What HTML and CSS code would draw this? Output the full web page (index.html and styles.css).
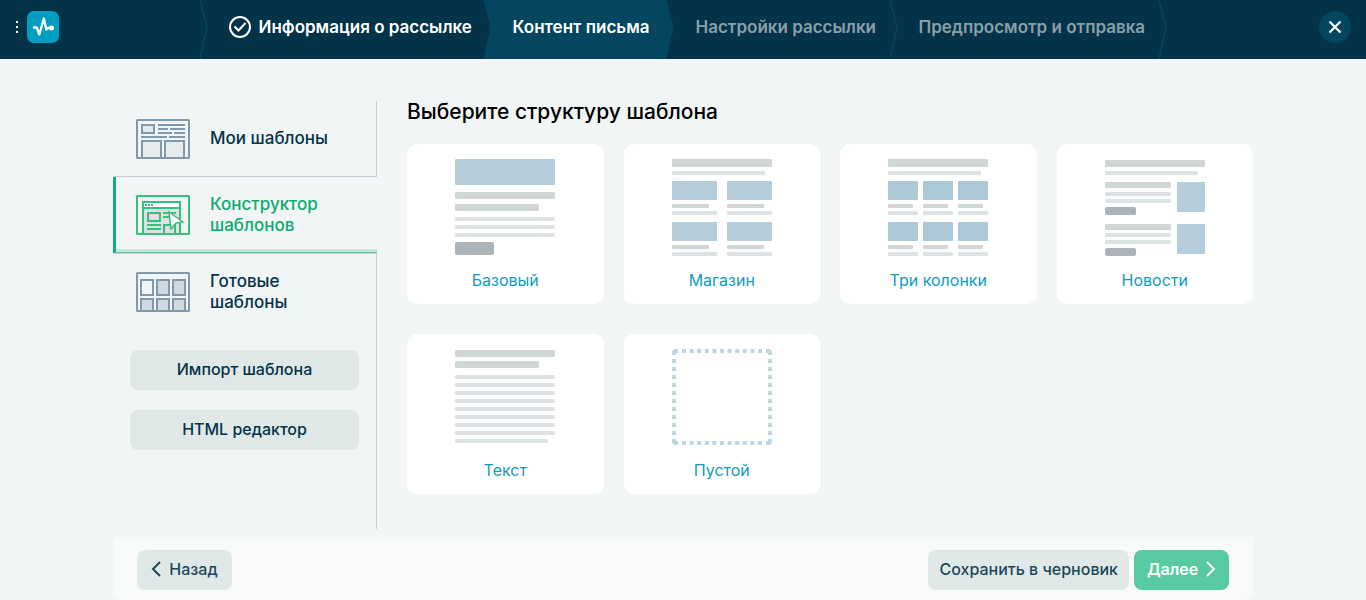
FILE: index.html
```html
<!DOCTYPE html>
<html lang="ru">
<head>
<meta charset="utf-8">
<meta name="viewport" content="width=device-width, initial-scale=1">
<title>Контент письма</title>
<link rel="stylesheet" href="styles.css">
</head>
<body>
<header class="topbar">
  <div class="topbar-brand">
    <button class="dots" type="button" aria-label="Меню"><svg width="2" height="12" viewBox="0 0 2 12" fill="#fff"><path d="M0 0h2v2H0zM0 5h2v2H0zM0 10h2v2H0z"/></svg></button>
    <a href="#" class="logo" aria-label="Главная"><svg width="32" height="32" viewBox="0 0 32 32"><rect width="32" height="32" rx="7" fill="#009fc1"/><path d="M6 16.500h3.800L12.300 23.500 16.800 7.500 19.300 18.500l1.500-1.500h4" fill="none" stroke="#fff" stroke-width="2.300" stroke-linejoin="round"/><circle cx="24.500" cy="17" r="2.500" fill="#fff"/></svg></a>
  </div>
  <nav class="steps" aria-label="Шаги">
    <a href="#" class="step step-done"><svg class="edge" width="8" height="59" viewBox="0 0 8 59"><path d="M0 0l7 27-7 32" fill="none" stroke="#04455f" stroke-width="1.500"/></svg><svg class="check" width="22" height="22" viewBox="0 0 22 22" fill="none" stroke="#fff" stroke-width="2"><circle cx="11" cy="11" r="10"/><path d="M5.500 10.500l4 4 7-7.500"/></svg>Информация о рассылке</a>
    <a href="#" class="step step-current" aria-current="step">Контент письма</a>
    <a href="#" class="step">Настройки рассылки</a>
    <a href="#" class="step"><svg class="edge" width="8" height="59" viewBox="0 0 8 59"><path d="M0 0l7 27-7 32" fill="none" stroke="#04455f" stroke-width="1.500"/></svg>Предпросмотр и отправка</a>
    <svg class="edge" width="8" height="59" viewBox="0 0 8 59"><path d="M0 0l7 27-7 32" fill="none" stroke="#04455f" stroke-width="1.500"/></svg>
  </nav>
  <button class="close" type="button" aria-label="Закрыть"><svg width="14" height="14" viewBox="0 0 14 14" stroke="#fff" stroke-width="2.200" fill="none"><path d="M1.500 1.500l11 11M12.500 1.500l-11 11"/></svg></button>
</header>

<div class="page">
  <div class="workspace">
    <aside class="sidebar">
      <a href="#" class="tab tab-first">
        <svg width="54" height="40" viewBox="0 0 54 40" fill="none" stroke="#8199aa" stroke-width="2"><rect x="1" y="1" width="52" height="38" rx=".5"/><rect x="6" y="6" width="12" height="8" fill="#e5eaec"/><path d="M22 6h27M22 10h10M34 10h15M22 14h14M38 14h11M5 18h26M33 18h16"/><path d="M6 39V22h19v17M29 39V22h19v17" fill="#e5eaec"/><path d="M1 39h52"/></svg>
        <span>Мои шаблоны</span>
      </a>
      <a href="#" class="tab tab-active">
        <svg width="54" height="40" viewBox="0 0 54 40" fill="none" stroke="#35c07c" stroke-width="2"><rect x="1" y="1" width="52" height="38" rx=".5"/><path d="M7 39V7h37v32" fill="#dcdfe6"/><path d="M8 8h35v4H8z" fill="#fff" stroke="none"/><path d="M7 13h37"/><path d="M9 10h2m1 0h2m1 0h2"/><rect x="12" y="18" width="12" height="8"/><path d="M27 18h13M27 22h8M11 30h14M11 34h14M28 39v-9h11v9M1 39h52"/><path d="M33 17l14 10-7 1-5 6z" fill="#fff" stroke-width="1.500"/></svg>
        <span>Конструктор шаблонов</span>
      </a>
      <div class="sidebar-rest">
        <a href="#" class="tab">
          <svg width="54" height="40" viewBox="0 0 54 40" fill="none" stroke="#8199aa" stroke-width="2"><rect x="1" y="1" width="52" height="38" rx=".5"/><path d="M5 8h12v15H5z"/><path d="M21 8h12v15H21zM37 8h12v15H37zM5 39V27h12v12M21 39V27h12v12M37 39V27h12v12" fill="#cfd8de"/><path d="M1 39h52"/></svg>
          <span>Готовые шаблоны</span>
        </a>
        <div class="sidebar-actions">
          <button class="btn" type="button">Импорт шаблона</button>
          <button class="btn" type="button">HTML редактор</button>
        </div>
      </div>
    </aside>

    <main class="content">
      <h1>Выберите структуру шаблона</h1>
      <div class="cards">
        <a href="#" class="card">
          <svg width="100" height="97" viewBox="0 0 100 97"><rect class="pic" width="100" height="26" rx="1"/><g class="head"><rect y="33" width="100" height="7" rx="1"/><rect y="45" width="84" height="7" rx="1"/></g><g class="line"><rect y="58" width="100" height="4" rx="1"/><rect y="66" width="100" height="4" rx="1"/><rect y="74" width="100" height="4" rx="1"/></g><rect class="pill" y="83" width="39" height="13" rx="2"/></svg>
          <span>Базовый</span>
        </a>
        <a href="#" class="card">
          <svg width="100" height="97" viewBox="0 0 100 97"><g class="head"><rect width="100" height="8" rx="1"/><rect y="45" width="37" height="4" rx="1"/><rect x="55" y="45" width="37" height="4" rx="1"/><rect y="86" width="37" height="4" rx="1"/><rect x="55" y="86" width="37" height="4" rx="1"/></g><g class="line"><rect y="12" width="93" height="4" rx="1"/><rect y="52" width="45" height="4" rx="1"/><rect x="55" y="52" width="45" height="4" rx="1"/><rect y="93" width="45" height="4" rx="1"/><rect x="55" y="93" width="45" height="4" rx="1"/></g><g class="pic"><rect y="22" width="45" height="19" rx="1"/><rect x="55" y="22" width="45" height="19" rx="1"/><rect y="63" width="45" height="19" rx="1"/><rect x="55" y="63" width="45" height="19" rx="1"/></g></svg>
          <span>Магазин</span>
        </a>
        <a href="#" class="card">
          <svg width="100" height="97" viewBox="0 0 100 97"><g class="head"><rect width="100" height="8" rx="1"/><rect y="45" width="25" height="4" rx="1"/><rect x="35" y="45" width="25" height="4" rx="1"/><rect x="70" y="45" width="25" height="4" rx="1"/><rect y="86" width="25" height="4" rx="1"/><rect x="35" y="86" width="25" height="4" rx="1"/><rect x="70" y="86" width="25" height="4" rx="1"/></g><g class="line"><rect y="12" width="93" height="4" rx="1"/><rect y="52" width="30" height="4" rx="1"/><rect x="35" y="52" width="30" height="4" rx="1"/><rect x="70" y="52" width="30" height="4" rx="1"/><rect y="93" width="30" height="4" rx="1"/><rect x="35" y="93" width="30" height="4" rx="1"/><rect x="70" y="93" width="30" height="4" rx="1"/></g><g class="pic pic-deep"><rect y="22" width="30" height="19" rx="1"/><rect x="35" y="22" width="30" height="19" rx="1"/><rect x="70" y="22" width="30" height="19" rx="1"/><rect y="63" width="30" height="19" rx="1"/><rect x="35" y="63" width="30" height="19" rx="1"/><rect x="70" y="63" width="30" height="19" rx="1"/></g></svg>
          <span>Три колонки</span>
        </a>
        <a href="#" class="card">
          <svg width="100" height="97" viewBox="0 0 100 97"><g class="head"><rect y="1" width="100" height="7" rx="1"/><rect y="23" width="66" height="6" rx="1"/><rect y="65" width="66" height="6" rx="1"/></g><g class="line"><rect y="12" width="93" height="4" rx="1"/><rect y="33" width="66" height="4" rx="1"/><rect y="40" width="66" height="4" rx="1"/><rect y="74" width="66" height="4" rx="1"/><rect y="81" width="66" height="4" rx="1"/></g><g class="pill"><rect y="48" width="31" height="8" rx="2"/><rect y="89" width="31" height="8" rx="2"/></g><g class="pic"><rect x="72" y="23" width="28" height="30" rx="1"/><rect x="72" y="65" width="28" height="30" rx="1"/></g></svg>
          <span>Новости</span>
        </a>
        <a href="#" class="card">
          <svg width="100" height="97" viewBox="0 0 100 97"><g class="head"><rect y="1" width="100" height="7" rx="1"/><rect y="12" width="84" height="7" rx="1"/></g><g class="line"><rect y="26" width="100" height="4" rx="1"/><rect y="34" width="100" height="4" rx="1"/><rect y="42" width="100" height="4" rx="1"/><rect y="50" width="100" height="4" rx="1"/><rect y="58" width="100" height="4" rx="1"/><rect y="66" width="100" height="4" rx="1"/><rect y="74" width="100" height="4" rx="1"/><rect y="82" width="100" height="4" rx="1"/><rect y="90" width="93" height="4" rx="1"/></g></svg>
          <span>Текст</span>
        </a>
        <a href="#" class="card">
          <svg width="100" height="97" viewBox="0 0 100 97" fill="none" stroke="#bdd4e1" stroke-width="4"><path d="M10 2h80M10 94h80" stroke-dasharray="4 3.600"/><path d="M2 10v76M98 10v76" stroke-dasharray="4 4"/><path d="M2 6V4q0-2 2-2h2M94 2h2q2 0 2 2v2M98 90v2q0 2-2 2h-2M6 94H4q-2 0-2-2v-2"/></svg>
          <span>Пустой</span>
        </a>
      </div>
    </main>
  </div>

  <footer class="actions">
    <button class="btn btn-soft" type="button"><svg width="10" height="16" viewBox="0 0 10 16" fill="none" stroke="currentColor" stroke-width="2"><path d="M9 1L2 8l7 7"/></svg>Назад</button>
    <div class="actions-end">
      <button class="btn btn-soft" type="button">Сохранить в черновик</button>
      <button class="btn btn-next" type="button">Далее<svg width="10" height="16" viewBox="0 0 10 16" fill="none" stroke="currentColor" stroke-width="2"><path d="M1 1l7 7-7 7"/></svg></button>
    </div>
  </footer>
</div>
</body>
</html>
```

FILE: styles.css
```css
* {
  box-sizing: border-box;
}

body {
  margin: 0;
  background: #f1f5f6;
  color: #033349;
  font: 500 16px/21px Inter, "Noto Sans", sans-serif;
}

a {
  color: inherit;
  text-decoration: none;
}

button {
  border: 0;
  padding: 0;
  background: none;
  font: inherit;
  color: inherit;
  cursor: pointer;
}

svg {
  display: block;
  flex: none;
}

.topbar {
  display: grid;
  grid-template-columns: 1fr auto 1fr;
  height: 59px;
  padding: 0 15px;
  background: #033349;
}

.topbar-brand {
  display: flex;
  align-items: center;
  gap: 8px;
  padding-bottom: 5px;
}

.dots {
  padding: 0 1px;
}

.steps {
  display: grid;
  grid-template-columns: 284px 183px 223px 269px 8px;
  color: #8a9fa9;
  font-size: 17px;
  font-weight: 600;
}

.step {
  position: relative;
  display: flex;
  align-items: center;
  padding: 0 0 5px 29px;
  white-space: nowrap;
}

.step .edge {
  position: absolute;
  left: 0;
  top: 0;
}

.step-done,
.step-current {
  color: #fff;
}

.check {
  margin-right: 8px;
}

.step-current {
  margin-right: -7px;
  background: #04455f;
  clip-path: polygon(0 0, 183px 0, 100% 27px, 183px 100%, 0 100%, 7px 27px);
}

.close {
  display: grid;
  place-items: center;
  justify-self: end;
  width: 32px;
  height: 32px;
  margin-top: 11px;
  border-radius: 50%;
  background: #04455f;
}

.page {
  max-width: 1140px;
  margin: 0 auto;
  padding-top: 42px;
}

.workspace {
  display: grid;
  grid-template-columns: 264px 1fr;
  gap: 30px;
}

.sidebar {
  display: flex;
  flex-direction: column;
}

.tab {
  display: flex;
  align-items: center;
  gap: 20px;
  min-height: 76px;
  padding: 0 46px 0 23px;
  font-size: 17px;
}

.tab-first {
  border-right: 1px solid #c9cfd1;
  border-bottom: 1px solid #c9cfd1;
}

.tab-active {
  padding-left: 20px;
  border-left: 3px solid #0bb07b;
  border-bottom: 1px solid #5fc6a1;
  box-shadow: inset 0 -3px #c0e7d8;
  color: #0bac6f;
}

.sidebar-rest {
  flex: 1;
  border-top: 1px solid #c9cfd1;
  border-right: 1px solid #c9cfd1;
}

.sidebar-actions {
  display: grid;
  gap: 20px;
  padding: 20px 17px 79px;
}

.btn {
  display: flex;
  align-items: center;
  justify-content: center;
  gap: 8px;
  min-width: 95px;
  height: 40px;
  padding: 0 11px 2px;
  border-radius: 8px;
  background: #e0e8e7;
  white-space: nowrap;
}

h1 {
  margin: 0 0 21px;
  color: #000;
  font-size: 21px;
  font-weight: 500;
  line-height: 22px;
}

.cards {
  display: grid;
  grid-template-columns: repeat(4, 1fr);
  gap: 30px 20px;
}

.card {
  display: flex;
  flex-direction: column;
  align-items: center;
  gap: 14px;
  padding: 15px 0 13px;
  border-radius: 10px;
  background: #fff;
  color: #109cc0;
  font-weight: 400;
}

.head {
  fill: #d0d6d5;
}

.line {
  fill: #dde3e5;
}

.pic {
  fill: #b5cdda;
}

.pic-deep {
  fill: #adc9d7;
}

.pill {
  fill: #abb4b8;
}

.actions {
  display: flex;
  justify-content: space-between;
  margin-top: 8px;
  padding: 13px 24px 10px;
  border-radius: 0 0 8px 8px;
  background: #f8faf9;
}

.actions-end {
  display: flex;
  gap: 5px;
}

.btn-soft {
  color: #1c475b;
}

.btn-next {
  background: #58caa2;
  color: #fff;
  font-weight: 600;
}
```
